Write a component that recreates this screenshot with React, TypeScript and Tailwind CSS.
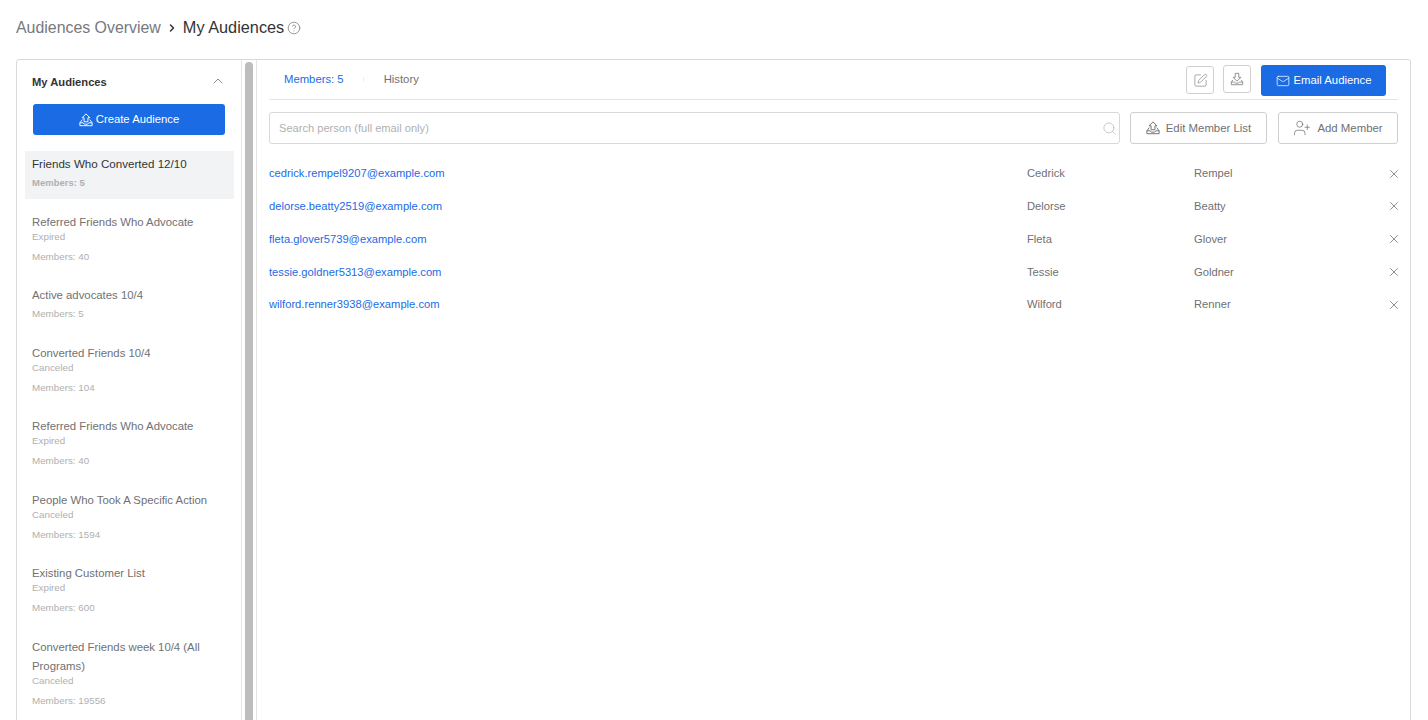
import { ChevronRight, ChevronUp, CircleHelp, Mail, Search, SquarePen, UserPlus, X } from "lucide-react";

const audiences = [
  { name: "Friends Who Converted 12/10", members: 5, active: true },
  { name: "Referred Friends Who Advocate", status: "Expired", members: 40 },
  { name: "Active advocates 10/4", members: 5 },
  { name: "Converted Friends 10/4", status: "Canceled", members: 104 },
  { name: "Referred Friends Who Advocate", status: "Expired", members: 40 },
  { name: "People Who Took A Specific Action", status: "Canceled", members: 1594 },
  { name: "Existing Customer List", status: "Expired", members: 600 },
  { name: "Converted Friends week 10/4 (All Programs)", status: "Canceled", members: 19556 },
];

const people = [
  { email: "cedrick.rempel9207@example.com", first: "Cedrick", last: "Rempel" },
  { email: "delorse.beatty2519@example.com", first: "Delorse", last: "Beatty" },
  { email: "fleta.glover5739@example.com", first: "Fleta", last: "Glover" },
  { email: "tessie.goldner5313@example.com", first: "Tessie", last: "Goldner" },
  { email: "wilford.renner3938@example.com", first: "Wilford", last: "Renner" },
];

function TrayUp({ className }: { className?: string }) {
  return (
    <svg viewBox="0 0 16 16" fill="none" stroke="currentColor" strokeWidth="1.1" strokeLinejoin="round" className={className}>
      <path d="M8 1 12.500 5.500H10.200V10H5.800V5.500H3.500z" />
      <path d="M3.800 7.500 1 11.200V14.500H15V11.200L12.200 7.500" />
      <path d="M1 11.200H4.800C5.200 12.400 6 12.800 8 12.800S10.800 12.400 11.200 11.200H15" />
    </svg>
  );
}

function TrayDown({ className }: { className?: string }) {
  return (
    <svg viewBox="0 0 16 16" fill="none" stroke="currentColor" strokeWidth="1.1" strokeLinejoin="round" className={className}>
      <path d="M6 1.500H10V6H12.500L8 10.500 3.500 6H6z" />
      <path d="M3.500 9 1.500 11V14.500H14.500V11L12.500 9" />
      <path d="M1.500 11.500H5C5.500 12.500 6.500 12.800 8 12.800S10.500 12.500 11 11.500H14.500" />
    </svg>
  );
}

export default function App() {
  return (
    <div className="h-[720px] overflow-hidden bg-white px-4 font-['Liberation_Sans',Arial,sans-serif]">
      <div className="flex h-[59px] items-center pb-[3px]">
        <span className="text-[15.9px] text-[#77797c]">Audiences Overview</span>
        <ChevronRight className="mx-[5px] h-3 w-3 text-[#333]" strokeWidth={3} />
        <span className="pb-0.5 text-[16.3px] text-[#333]">My Audiences</span>
        <CircleHelp className="ml-[3px] h-[14px] w-[14px] text-[#777]" strokeWidth={1.25} />
      </div>

      <div className="flex h-[700px] w-[1395px] rounded-[3px] border border-[#d9d9d9]">
        <aside className="w-[225px] shrink-0 border-r border-[#e4e4e4] pl-2 pr-[7px]">
          <div className="flex h-11 items-center justify-between pl-[7px] pr-2">
            <span className="text-[11.2px] font-bold text-[#333]">My Audiences</span>
            <ChevronUp className="-mt-0.5 h-4 w-4 text-[#777]" strokeWidth={1.25} />
          </div>
          <div className="pl-2 pr-[9px]">
            <button className="flex h-[31px] w-full items-center justify-center gap-[3px] rounded-[3px] bg-[#1b6be5] text-[11.300px] text-white">
              <TrayUp className="h-[14px] w-[14px]" />
              Create Audience
            </button>
          </div>
          <ul className="mt-4">
            {audiences.map((a, i) => (
              <li key={i} className={`mb-[9.500px] pb-[7px] pl-[7px] pr-2 pt-[3.400px] ${a.active ? "bg-[#f2f3f5]" : ""}`}>
                <div className={`leading-[19px] ${a.active ? "-mb-[0.4px] text-[11.600px] text-[#333]" : "-mb-[1.4px] mt-px text-[11.350px] text-[#6f7174]"}`}>{a.name}</div>
                {a.status && <div className="mb-1 text-[9.800px] leading-3 text-[#b0b0b0]">{a.status}</div>}
                <div className={`leading-[19px] text-[#b0b0b0] ${a.active ? "text-[9.500px] font-bold" : "text-[9.800px]"}`}>Members: {a.members}</div>
              </li>
            ))}
          </ul>
        </aside>

        <div className="w-[15px] shrink-0 border-r border-[#e4e4e4] pl-[3px] pr-[3px] pt-[2px]">
          <div className="h-full w-2 rounded-t bg-[#bdbdbd]" />
        </div>

        <main className="min-w-0 flex-1 pl-3 pr-3">
          <div className="flex h-10 items-start justify-between border-b border-[#e4e4e4] pl-[15px] pr-3">
            <div className="mt-[11px] flex items-center text-[11.300px]">
              <span className="text-[#1b6be5]">Members: 5</span>
              <span className="ml-[19px] mr-[20px] h-[5px] w-px bg-[#eee]" />
              <span className="text-[#6f7174]">History</span>
            </div>
            <div className="mt-[5px] flex items-start">
              <button className="mt-px flex h-7 w-7 items-center justify-center rounded-[3px] border border-[#d0d0d0] text-[#8f8f8f]">
                <SquarePen className="h-[15px] w-[15px]" strokeWidth={1.25} />
              </button>
              <button className="ml-[9px] flex h-7 w-7 items-center justify-center rounded-[3px] border border-[#d0d0d0] text-[#8f8f8f]">
                <TrayDown className="h-[14px] w-[14px]" />
              </button>
              <button className="ml-[10px] flex h-[31px] w-[125px] items-center justify-center gap-1 rounded-[3px] bg-[#1b6be5] text-[11.300px] text-white">
                <Mail className="h-[14px] w-[14px]" strokeWidth={1.25} />
                Email Audience
              </button>
            </div>
          </div>

          <div className="mt-3 flex items-center">
            <div className="flex h-8 w-[851px] items-center justify-between rounded-[3px] border border-[#d9d9d9] pl-[9px] pr-0.5">
              <span className="text-[11.100px] text-[#b0b0b0]">Search person (full email only)</span>
              <Search className="h-[15px] w-[15px] text-[#aaa]" strokeWidth={1} />
            </div>
            <button className="ml-[10px] flex h-8 w-[137px] items-center justify-center gap-[6px] rounded-[3px] border border-[#cfcfcf] pt-px text-[11.400px] text-[#6f7174]">
              <TrayUp className="-mt-px h-[14px] w-[14px]" />
              Edit Member List
            </button>
            <button className="ml-[11px] flex h-8 w-[120px] items-center justify-center gap-[6px] rounded-[3px] border border-[#cfcfcf] pt-px text-[11.400px] text-[#6f7174]">
              <UserPlus className="-mt-px h-[18px] w-[18px]" strokeWidth={1} />
              Add Member
            </button>
          </div>

          <div className="mt-[13.200px]">
            {people.map((p) => (
              <div key={p.email} className="flex h-[32.800px] items-center text-[11.200px]">
                <span className="w-[758px] text-[#1b6be5]">{p.email}</span>
                <span className="w-[167px] text-[#6f7174]">{p.first}</span>
                <span className="flex-1 text-[#6f7174]">{p.last}</span>
                <X className="-mr-[3px] h-[14px] w-[14px] text-[#666]" strokeWidth={1.25} />
              </div>
            ))}
          </div>
        </main>
      </div>
    </div>
  );
}
